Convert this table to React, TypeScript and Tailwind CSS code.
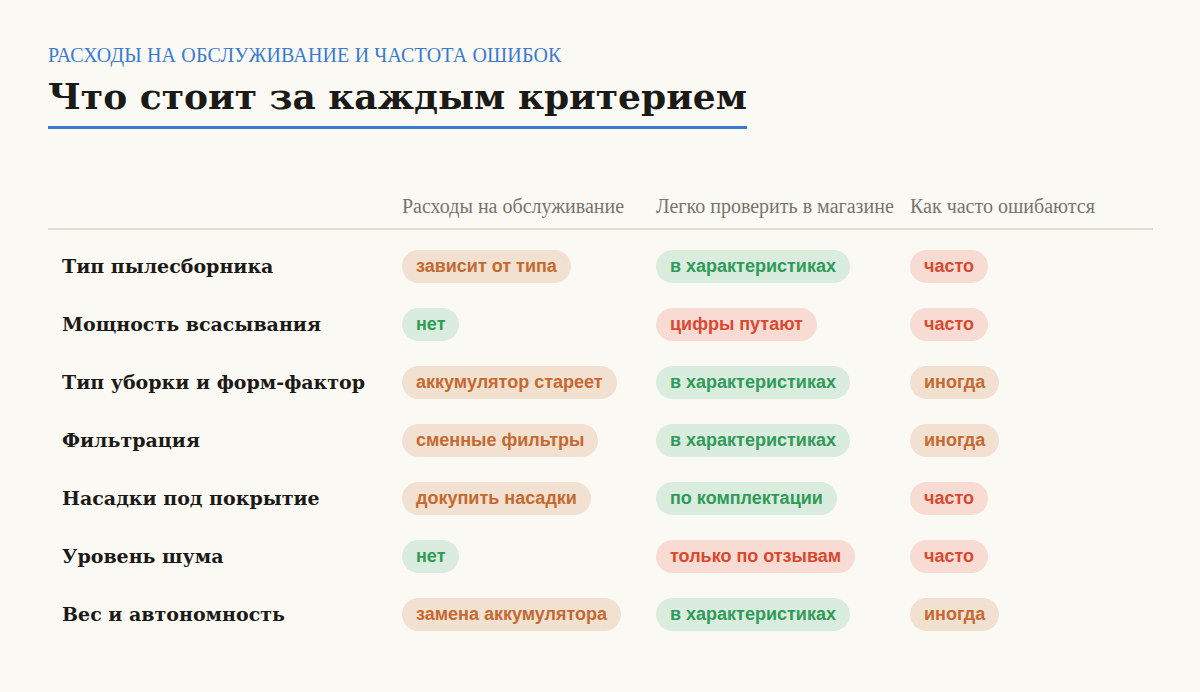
const rows = [
  { name: 'Тип пылесборника', cost: ['зависит от типа', 'o'], check: ['в характеристиках', 'g'], freq: ['часто', 'r'] },
  { name: 'Мощность всасывания', cost: ['нет', 'g'], check: ['цифры путают', 'r'], freq: ['часто', 'r'] },
  { name: 'Тип уборки и форм-фактор', cost: ['аккумулятор стареет', 'o'], check: ['в характеристиках', 'g'], freq: ['иногда', 'o'] },
  { name: 'Фильтрация', cost: ['сменные фильтры', 'o'], check: ['в характеристиках', 'g'], freq: ['иногда', 'o'] },
  { name: 'Насадки под покрытие', cost: ['докупить насадки', 'o'], check: ['по комплектации', 'g'], freq: ['часто', 'r'] },
  { name: 'Уровень шума', cost: ['нет', 'g'], check: ['только по отзывам', 'r'], freq: ['часто', 'r'] },
  { name: 'Вес и автономность', cost: ['замена аккумулятора', 'o'], check: ['в характеристиках', 'g'], freq: ['иногда', 'o'] },
];

const tones: Record<string, string> = {
  o: 'bg-[#f2e0d0] text-[#c4692f]',
  g: 'bg-[#d9ecdd] text-[#2f9b58]',
  r: 'bg-[#f8dcd4] text-[#d9482f]',
};

const Pill = ({ cell }: { cell: string[] }) => (
  <span
    className={`inline-flex h-[33px] items-center rounded-full px-[14px] text-[18px] font-bold ${tones[cell[1]]}`}
    style={{ fontFamily: '"Liberation Sans", Arial, sans-serif' }}
  >
    {cell[0]}
  </span>
);

const display = { fontFamily: '"DejaVu Serif", Georgia, serif' };

export default function App() {
  return (
    <div
      className="min-h-[692px] w-full bg-[#fbf9f4] px-[48px] pt-[42px]"
      style={{ fontFamily: '"Liberation Serif", "Times New Roman", serif' }}
    >
      <div className="text-[20px] uppercase leading-[26px] tracking-[0.15px] text-[#3a7bd0]">
        Расходы на обслуживание и частота ошибок
      </div>
      <h1
        className="mt-[6px] inline-block border-b-[3px] border-[#3a7bd0] pb-[8px] text-[36px] font-bold leading-[44px] text-[#1c1a17]"
        style={display}
      >
        Что стоит за каждым критерием
      </h1>

      <div className="mt-[66px] w-[1105px]">
        <div className="grid grid-cols-[340px_254px_254px_1fr] border-b-2 border-[#dfdcd0] pb-[10px] text-[20px] leading-[23px] text-[#77746b]">
          <div />
          <div className="pl-[14px]">Расходы на обслуживание</div>
          <div className="pl-[14px]">Легко проверить в магазине</div>
          <div className="pl-[14px]">Как часто ошибаются</div>
        </div>
        <div className="pt-[7px]">
          {rows.map((r) => (
            <div key={r.name} className="grid h-[58px] grid-cols-[340px_254px_254px_1fr] items-center">
              <div className="pl-[14px] text-[19px] font-bold text-[#1c1a17]" style={display}>
                {r.name}
              </div>
              <div className="pl-[14px]"><Pill cell={r.cost} /></div>
              <div className="pl-[14px]"><Pill cell={r.check} /></div>
              <div className="pl-[14px]"><Pill cell={r.freq} /></div>
            </div>
          ))}
        </div>
      </div>
    </div>
  );
}
